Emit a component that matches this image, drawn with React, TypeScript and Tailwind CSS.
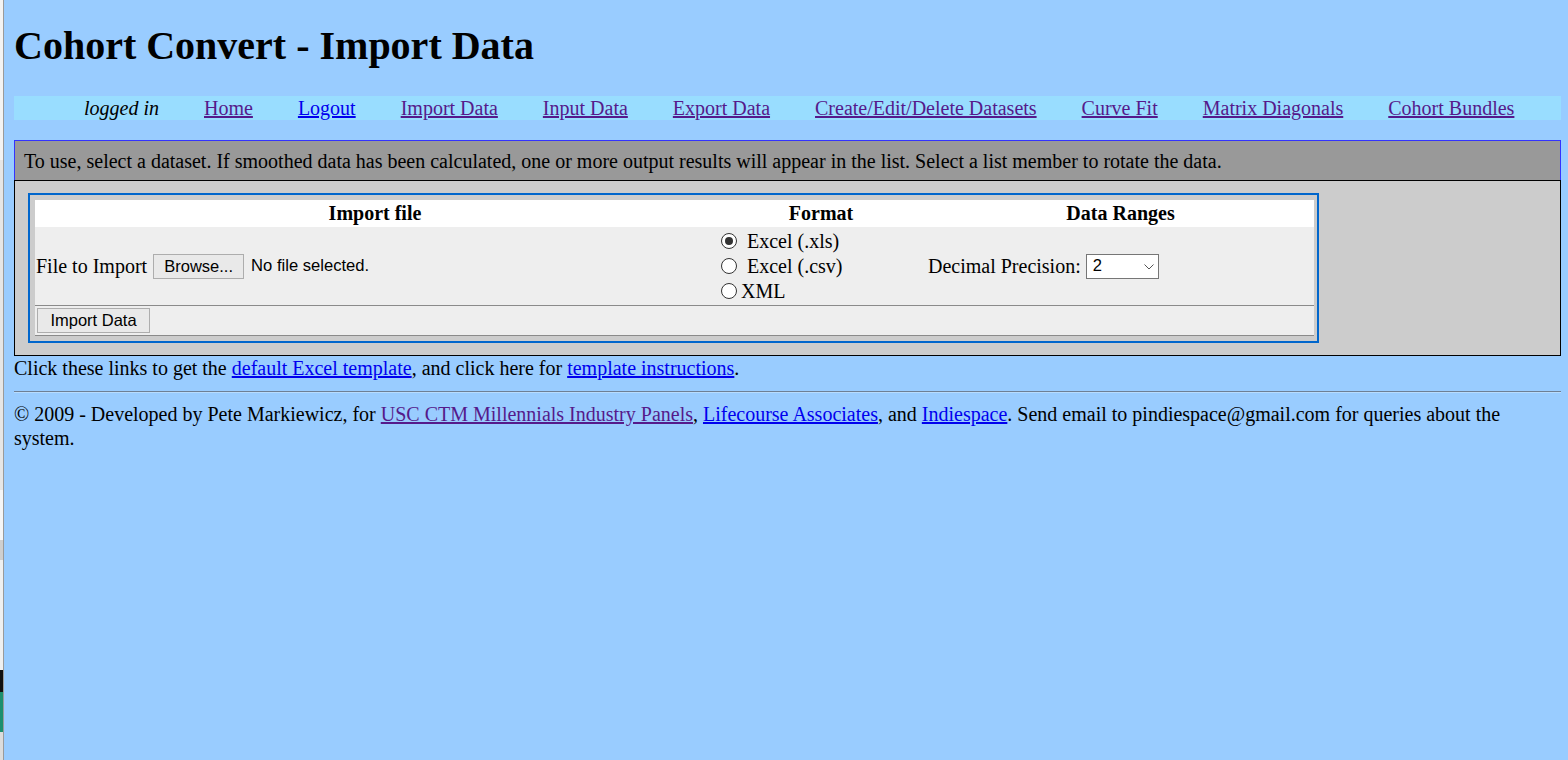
import React from "react";

const serif = { fontFamily: '"Liberation Serif", "Times New Roman", serif' };
const sans = { fontFamily: '"Liberation Sans", Arial, sans-serif' };

function Radio({ checked }: { checked?: boolean }) {
  return (
    <span className="inline-flex w-[16px] h-[16px] rounded-full border-[1.5px] border-[#333] bg-white items-center justify-center shrink-0">
      {checked && <span className="w-[8px] h-[8px] rounded-full bg-[#333]" />}
    </span>
  );
}

function LeftStrip() {
  return (
    <div className="w-[4px] shrink-0 flex flex-col border-r border-[#9a9a9a]">
      <div className="h-[160px] bg-[#f3f3f3]" />
      <div className="h-[330px] bg-[#e6e6e6]" />
      <div className="h-[50px] bg-[#f6f6f6]" />
      <div className="h-[20px] bg-[#cfcfcf]" />
      <div className="h-[110px] bg-[#f0f0f0]" />
      <div className="h-[22px] bg-[#111]" />
      <div className="h-[40px] bg-[#1c8f6f]" />
      <div className="flex-1 bg-[#dcdcdc]" />
    </div>
  );
}

const navItems: { label: string; visited: boolean }[] = [
  { label: "Home", visited: true },
  { label: "Logout", visited: false },
  { label: "Import Data", visited: true },
  { label: "Input Data", visited: true },
  { label: "Export Data", visited: true },
  { label: "Create/Edit/Delete Datasets", visited: true },
  { label: "Curve Fit", visited: true },
  { label: "Matrix Diagonals", visited: true },
  { label: "Cohort Bundles", visited: true },
];

export default function App() {
  return (
    <div className="flex w-[1568px] h-[760px] overflow-hidden bg-[#99ccff] text-black" style={serif}>
      <LeftStrip />
      <div className="flex-1 pl-[10px] pr-[7px]">
        <h1 className="mt-[22px] text-[40px] leading-[48px] font-bold">Cohort Convert - Import Data</h1>

        <div className="mt-[26px] h-[24px] bg-[#99ddff] flex items-center pl-[70px] gap-[45px] text-[20px] leading-[24px] whitespace-nowrap">
          <span className="italic">logged in</span>
          {navItems.map((n) => (
            <a
              key={n.label}
              href="#"
              className={"underline " + (n.visited ? "text-[#551a8b]" : "text-[#0000ee]")}
            >
              {n.label}
            </a>
          ))}
        </div>

        <div className="mt-[20px]">
          <div className="border border-b-0 border-[#3333ff] bg-[#999999] pl-[9px] pt-[8px] pb-[7px] text-[20px] leading-[24px] whitespace-nowrap">
            To use, select a dataset. If smoothed data has been calculated, one or more output results will appear in the list. Select a list member to rotate the data.
          </div>
          <div className="border border-black bg-[#cccccc] pt-[12px] pb-[12px] pl-[13px]">
            <div className="w-[1291px] border-2 border-[#0066cc] pt-[5px] pl-[5px] pr-[3px] pb-[5px]">
              <div className="grid grid-cols-[680px_212px_1fr] bg-white h-[27px] text-[20px] leading-[27px] font-bold text-center">
                <div>Import file</div>
                <div>Format</div>
                <div>Data Ranges</div>
              </div>
              <div className="grid grid-cols-[680px_212px_1fr] bg-[#eeeeee] h-[78px] text-[20px] leading-[24px]">
                <div className="flex items-center pl-[1px]">
                  <span>File to Import</span>
                  <button
                    className="ml-[6px] w-[91px] h-[25px] bg-[#e9e9e9] border border-[#adadad] text-[16.5px] leading-[23px] text-black text-center"
                    style={sans}
                  >
                    Browse...
                  </button>
                  <span className="ml-[7px] text-[16.6px]" style={sans}>No file selected.</span>
                </div>
                <div className="flex flex-col pt-[1px]">
                  <div className="h-[25px] flex items-center pl-[6px]">
                    <Radio checked />
                    <span className="ml-[10px]">Excel (.xls)</span>
                  </div>
                  <div className="h-[25px] flex items-center pl-[6px]">
                    <Radio />
                    <span className="ml-[10px]">Excel (.csv)</span>
                  </div>
                  <div className="h-[25px] flex items-center pl-[6px]">
                    <Radio />
                    <span className="ml-[4px]">XML</span>
                  </div>
                </div>
                <div className="flex items-center pl-[1px]">
                  <span>Decimal Precision:</span>
                  <div className="ml-[5px] w-[73px] h-[25px] bg-white border border-[#767676] flex items-center pl-[6px]">
                    <span className="text-[16.6px] leading-[20px]" style={sans}>2</span>
                    <svg width="10" height="6" viewBox="0 0 10 6" className="ml-[42px] mt-[1px]">
                      <polyline points="0.5,0.5 5,5 9.5,0.5" fill="none" stroke="#555" strokeWidth="1" />
                    </svg>
                  </div>
                </div>
              </div>
              <div className="bg-[#eeeeee] border-t border-b border-[#8a8a8a] h-[31px] pt-[2px] pl-[2px]">
                <button
                  className="w-[113px] h-[25px] bg-[#e9e9e9] border border-[#adadad] text-[16.5px] leading-[23px] text-black text-center"
                  style={sans}
                >
                  Import Data
                </button>
              </div>
            </div>
          </div>
        </div>

        <p className="text-[20px] leading-[24px]">
          Click these links to get the{" "}
          <a href="#" className="underline text-[#0000ee]">default Excel template</a>, and click here for{" "}
          <a href="#" className="underline text-[#0000ee]">template instructions</a>.
        </p>

        <div className="mt-[11px] border-t border-b border-t-[#6d7f95] border-b-[#b7dcff]" />

        <p className="mt-[9px] text-[20px] leading-[24px]">
          © 2009 - Developed by Pete Markiewicz, for{" "}
          <a href="#" className="underline text-[#551a8b]">USC CTM Millennials Industry Panels</a>,{" "}
          <a href="#" className="underline text-[#0000ee]">Lifecourse Associates</a>, and{" "}
          <a href="#" className="underline text-[#0000ee]">Indiespace</a>. Send email to pindiespace@gmail.com for queries about the system.
        </p>
      </div>
    </div>
  );
}
